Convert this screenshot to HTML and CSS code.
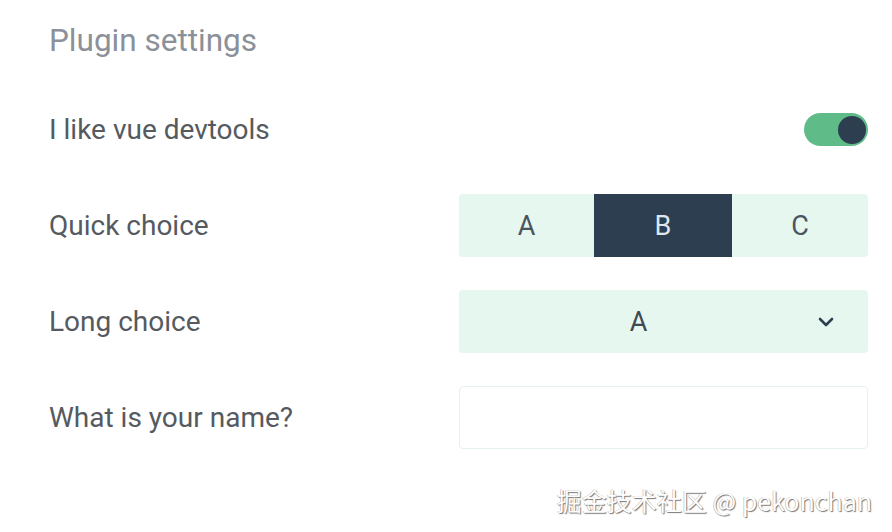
FILE: index.html
```html
<!DOCTYPE html>
<html>
<head>
<meta charset="utf-8">
<link rel="stylesheet" href="styles.css">
</head>
<body>
<div class="panel">
  <div class="title">Plugin settings</div>
  <div class="rows">
    <div class="row">
      <div class="label">I like vue devtools</div>
      <div class="control toggle-wrap">
        <div class="toggle"><div class="knob"></div></div>
      </div>
    </div>
    <div class="row">
      <div class="label">Quick choice</div>
      <div class="control group">
        <div class="seg">A</div>
        <div class="seg active">B</div>
        <div class="seg">C</div>
      </div>
    </div>
    <div class="row">
      <div class="label">Long choice</div>
      <div class="control select">
        <span class="select-value">A</span>
        <svg class="chev" width="18" height="12" viewBox="0 0 18 12"><path d="M3 3 L9 9 L15 3" fill="none" stroke="#2c3e50" stroke-width="2.6" stroke-linecap="round" stroke-linejoin="round"/></svg>
      </div>
    </div>
    <div class="row">
      <div class="label">What is your name?</div>
      <div class="control input"></div>
    </div>
  </div>
</div>
<div class="watermark">掘金技术社区 @ pekonchan</div>
</body>
</html>
```
FILE: styles.css
```css
html, body {
  margin: 0;
  padding: 0;
  background: #fff;
  width: 892px;
  height: 532px;
  overflow: hidden;
  font-family: Roboto, "Noto Sans", sans-serif;
}
.panel {
  padding: 21px 24px 0 49px;
}
.title {
  font-size: 31.5px;
  line-height: 40px;
  color: #8b9099;
  height: 40px;
}
.rows {
  margin-top: 37px;
  display: flex;
  flex-direction: column;
  gap: 33px;
}
.row {
  display: grid;
  grid-template-columns: 1fr 409px;
  align-items: center;
  height: 63px;
}
.label {
  font-size: 28px;
  color: #555a60;
}
.control {
  height: 63px;
  box-sizing: border-box;
}
.toggle-wrap {
  display: flex;
  align-items: center;
  justify-content: flex-end;
}
.toggle {
  width: 64px;
  height: 33px;
  border-radius: 17px;
  background: #5fbb88;
  display: flex;
  align-items: center;
  justify-content: flex-end;
  padding-right: 2px;
  box-sizing: border-box;
}
.knob {
  width: 28px;
  height: 28px;
  border-radius: 50%;
  background: #2c3e50;
}
.group {
  display: grid;
  grid-template-columns: 135px 138px 136px;
  background: #e6f7ef;
  border-radius: 4px;
  overflow: hidden;
}
.seg {
  display: flex;
  align-items: center;
  justify-content: center;
  font-size: 27px;
  color: #4a5560;
}
.seg.active {
  background: #2c3e50;
  color: #dfe6ee;
}
.select {
  background: #e6f7ef;
  border-radius: 4px;
  display: flex;
  align-items: center;
  justify-content: center;
  padding-right: 50px;
  position: relative;
  font-size: 27px;
  color: #3f4a52;
}
.chev {
  position: absolute;
  right: 33px;
  top: 26px;
}
.input {
  border: 1px solid #e3f2ec;
  border-radius: 4px;
  background: #fff;
}
.watermark {
  position: absolute;
  right: 20px;
  bottom: 16px;
  font-family: "Noto Sans CJK SC", "Noto Sans", sans-serif;
  font-size: 25px;
  line-height: 32px;
  color: #fff;
  text-shadow: 1px 1px 1px #777, -0.5px -0.5px 0.5px #aaa;
}
```
